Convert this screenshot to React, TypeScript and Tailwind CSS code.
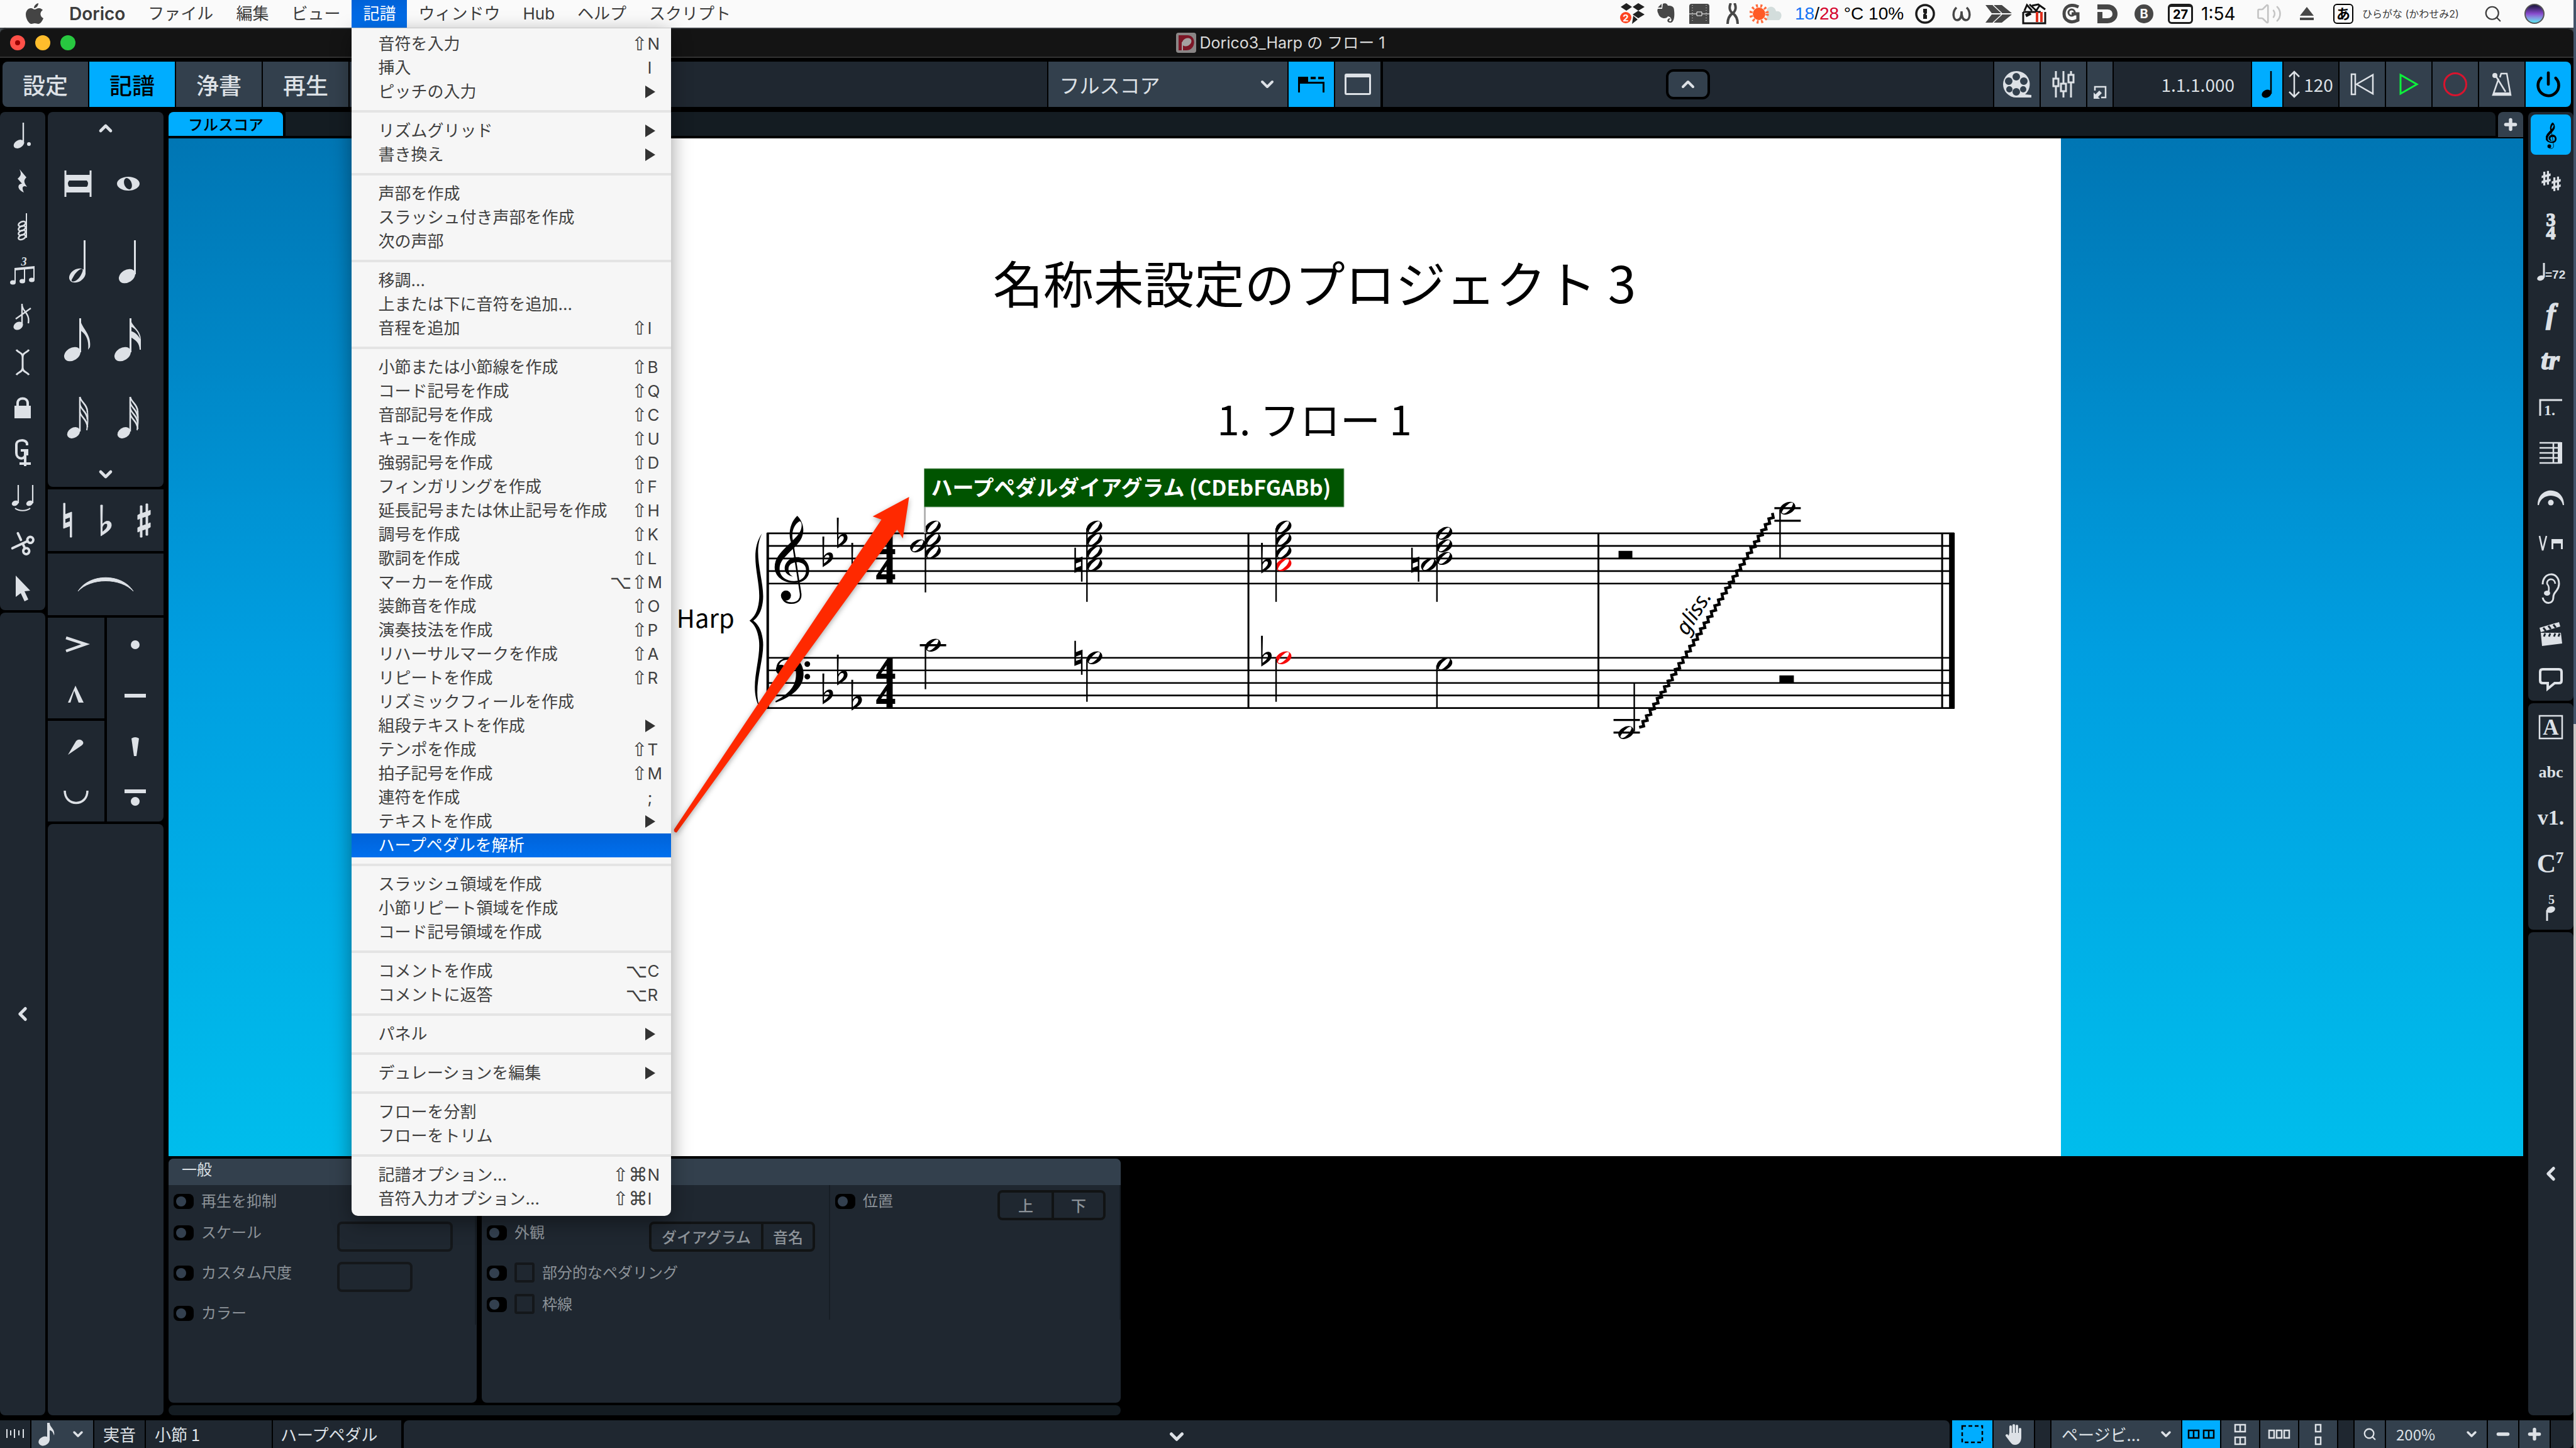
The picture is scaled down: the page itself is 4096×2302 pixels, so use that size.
import { ChevronDown, ChevronLeft, ChevronUp, Minus, Plus, Power, Scissors, Search, Volume2 } from "lucide-react";
import { clsx } from "clsx";
import type { ReactNode } from "react";

type MenuItem = { label: string; mods?: string; shortcut?: string; sub?: boolean; active?: boolean };

const menuGroups: MenuItem[][] = [
	[
		{ label: "音符を入力", mods: "⇧", shortcut: "N" },
		{ label: "挿入", shortcut: "I" },
		{ label: "ピッチの入力", sub: true },
	],
	[
		{ label: "リズムグリッド", sub: true },
		{ label: "書き換え", sub: true },
	],
	[{ label: "声部を作成" }, { label: "スラッシュ付き声部を作成" }, { label: "次の声部" }],
	[
		{ label: "移調..." },
		{ label: "上または下に音符を追加..." },
		{ label: "音程を追加", mods: "⇧", shortcut: "I" },
	],
	[
		{ label: "小節または小節線を作成", mods: "⇧", shortcut: "B" },
		{ label: "コード記号を作成", mods: "⇧", shortcut: "Q" },
		{ label: "音部記号を作成", mods: "⇧", shortcut: "C" },
		{ label: "キューを作成", mods: "⇧", shortcut: "U" },
		{ label: "強弱記号を作成", mods: "⇧", shortcut: "D" },
		{ label: "フィンガリングを作成", mods: "⇧", shortcut: "F" },
		{ label: "延長記号または休止記号を作成", mods: "⇧", shortcut: "H" },
		{ label: "調号を作成", mods: "⇧", shortcut: "K" },
		{ label: "歌詞を作成", mods: "⇧", shortcut: "L" },
		{ label: "マーカーを作成", mods: "⌥⇧", shortcut: "M" },
		{ label: "装飾音を作成", mods: "⇧", shortcut: "O" },
		{ label: "演奏技法を作成", mods: "⇧", shortcut: "P" },
		{ label: "リハーサルマークを作成", mods: "⇧", shortcut: "A" },
		{ label: "リピートを作成", mods: "⇧", shortcut: "R" },
		{ label: "リズミックフィールを作成" },
		{ label: "組段テキストを作成", sub: true },
		{ label: "テンポを作成", mods: "⇧", shortcut: "T" },
		{ label: "拍子記号を作成", mods: "⇧", shortcut: "M" },
		{ label: "連符を作成", shortcut: ";" },
		{ label: "テキストを作成", sub: true },
		{ label: "ハープペダルを解析", active: true },
	],
	[{ label: "スラッシュ領域を作成" }, { label: "小節リピート領域を作成" }, { label: "コード記号領域を作成" }],
	[
		{ label: "コメントを作成", mods: "⌥", shortcut: "C" },
		{ label: "コメントに返答", mods: "⌥", shortcut: "R" },
	],
	[{ label: "パネル", sub: true }],
	[{ label: "デュレーションを編集", sub: true }],
	[{ label: "フローを分割" }, { label: "フローをトリム" }],
	[
		{ label: "記譜オプション...", mods: "⇧⌘", shortcut: "N" },
		{ label: "音符入力オプション...", mods: "⇧⌘", shortcut: "I" },
	],
];

/* ---------- music glyphs, drawn around a pitch position ---------- */

function TrebleClef() {
	return (
		<g>
			<path
				fillRule="evenodd"
				d="M29 97C20 95 16 90 16 84C16 74 25 66 36 66C47 66 55 75 55 87C55 99 46 107 31 107C14 107 0 97 0 82C0 68 9 59 19 49L26 42C22 32 23 12 36 0C46 10 48 24 43 35C38 46 28 53 19 63C11 71 7 78 8 87C9 97 18 104 31 104C43 104 50 97 50 87C50 78 44 74 36 74C28 74 22 78 22 85C22 90 24 94 29 97ZM39 9C31 14 26 26 29 39C37 32 43 24 43 15C43 11 41 8 39 9Z"
			/>
			<path d="M28 39L41 122C43 133 37 139 27 139C20 139 14 136 12 129" fill="none" stroke="currentColor" strokeWidth="2.6" />
			<circle cx="18" cy="127" r="8" />
		</g>
	);
}

function BassClef() {
	return (
		<g>
			<path d="M2 20C0 7 10 0 22 0C37 0 45 11 45 26C45 47 27 62 1 71L0 69C22 57 33 45 33 26C33 12 29 3 20 3C12 3 7 7 6 12Z" />
			<circle cx="9" cy="19" r="8" />
			<circle cx="51" cy="10" r="4.5" />
			<circle cx="51" cy="30" r="4.5" />
		</g>
	);
}

function Flat() {
	return (
		<path
			fillRule="evenodd"
			d="M0 -35H3L2.4 -4C7 -11 17 -12 17 -3C17 4 8 9 0.5 14ZM2.6 0L2.5 8C7 5 11 1 11 -3C11 -7 5 -7 2.6 0Z"
		/>
	);
}

function Natural() {
	return <path fillRule="evenodd" d="M0 -27H2.5V-9L13 -13V27H10.5V9L0 13ZM2.5 -2V5L10.5 2V-5Z" />;
}

function Sharp() {
	return (
		<path
			d="M4 -23H7V-11L13 -13V-26H16V-14L20 -16V-9L16 -7V6L20 4V11L16 13V24H13V14L7 16V27H4V17L0 19V12L4 10V-3L0 -1V-8L4 -10ZM7 -4V9L13 7V-6Z"
			fillRule="evenodd"
		/>
	);
}

function HalfHead({ x, y, color = "#000" }: { x: number; y: number; color?: string }) {
	return (
		<g transform={`translate(${x} ${y}) rotate(-28)`} fill={color}>
			<path
				fillRule="evenodd"
				d="M-13 0C-13 -6 -7 -9 0 -9C7 -9 13 -6 13 0C13 6 7 9 0 9C-7 9 -13 6 -13 0ZM-11 3C-9 7 -2 5 4 3C9 0 12 -2 11 -4C9 -7 2 -5 -4 -3C-9 0 -12 1 -11 3Z"
			/>
		</g>
	);
}

function Stem({ x, y1, y2 }: { x: number; y1: number; y2: number }) {
	return <path d={`M${x} ${y1}V${y2}`} stroke="#000" strokeWidth="2.4" />;
}

const trebleLines = [850, 870, 890, 910, 930];
const bassLines = [1048, 1068, 1088, 1108, 1128];
const keyFlats = [
	{ x: 1309, y: 40 },
	{ x: 1332, y: 10 },
	{ x: 1355, y: 50 },
];

// Zigzag line from the low note up to the high one
const glissando = Array.from({ length: 75 }, (_, i) => {
	const t = i / 74;
	const side = i % 2 ? 2.6 : -2.6;
	const x = 2611 + 212 * t + side * 0.85;
	const y = 1160 - 341 * t + side * 0.53;
	return `${i ? "L" : "M"}${x.toFixed(1)} ${y.toFixed(1)}`;
}).join("");

function Score() {
	return (
		<svg viewBox="904 720 2376 640" className="mt-[22px] block w-full" fill="#000" color="#000" role="img" aria-label="Harp">
			{[...trebleLines, ...bassLines].map((y) => (
				<path key={y} d={`M1221 ${y}H3110`} stroke="#000" strokeWidth="2.6" />
			))}
			<path d="M1222 849V1129" stroke="#000" strokeWidth="4" />
			<path d="M1987 849V1129M2544 849V1129M3091 849V1129" stroke="#000" strokeWidth="3" />
			<path d="M3102 849H3111V1129H3102Z" />
			<path d="M1213 850C1190 882 1212 925 1208 958C1206 974 1201 983 1193 989C1201 995 1206 1004 1208 1020C1212 1053 1190 1096 1210 1129C1196 1096 1219 1048 1214 1018C1212 1003 1206 994 1199 989C1206 984 1212 975 1214 960C1219 930 1196 882 1213 850Z" />
			<text x="1077" y="1000" fontSize="40" className="font-['Noto_Sans_CJK_JP',sans-serif]">
				Harp
			</text>

			<g transform="translate(1233 822)">
				<TrebleClef />
			</g>
			<g transform="translate(1234 1048)">
				<BassClef />
			</g>
			{keyFlats.map(({ x, y }) => (
				<g key={x}>
					<g transform={`translate(${x} ${850 + y})`}>
						<Flat />
					</g>
					<g transform={`translate(${x} ${1068 + y})`}>
						<Flat />
					</g>
				</g>
			))}
			{[890, 930, 1088, 1128].map((y) => (
				<text key={y} x="1410" y={y} fontSize="60" fontWeight="700" textAnchor="middle" stroke="#000" strokeWidth="2" className="font-['Liberation_Serif',serif]">
					4
				</text>
			))}

			{/* bar 1 */}
			{[840, 860, 880].map((y) => (
				<HalfHead key={y} x={1485} y={y} />
			))}
			<HalfHead x={1461} y={870} />
			<Stem x={1473} y1={840} y2={944} />
			<path d="M1464 1028H1506" stroke="#000" strokeWidth="3.4" />
			<HalfHead x={1485} y={1028} />
			<Stem x={1473} y1={1030} y2={1098} />
			{[840, 860, 880, 900, 1048].map((y) => (
				<HalfHead key={y} x={1742} y={y} />
			))}
			<Stem x={1730} y1={842} y2={959} />
			<Stem x={1730} y1={1050} y2={1118} />
			<g transform="translate(1710 900)">
				<Natural />
			</g>
			<g transform="translate(1710 1048)">
				<Natural />
			</g>

			{/* bar 2, altered notes in red */}
			{[840, 860, 880].map((y) => (
				<HalfHead key={y} x={2043} y={y} />
			))}
			<HalfHead x={2043} y={900} color="#f50a0a" />
			<HalfHead x={2043} y={1048} color="#f50a0a" />
			<Stem x={2031} y1={842} y2={959} />
			<Stem x={2031} y1={1050} y2={1118} />
			<g transform="translate(2007 900)">
				<Flat />
			</g>
			<g transform="translate(2007 1048)">
				<Flat />
			</g>
			{[850, 870, 890, 1058].map((y) => (
				<HalfHead key={y} x={2299} y={y} />
			))}
			<HalfHead x={2274} y={900} />
			<Stem x={2287} y1={852} y2={959} />
			<Stem x={2287} y1={1060} y2={1128} />
			<g transform="translate(2246 900)">
				<Natural />
			</g>

			{/* bar 3 */}
			<path d="M2576 878H2598V890H2576ZM2832 1076H2855V1088H2832Z" />
			<path d="M2824 810H2866M2824 830H2866M2568 1147H2610M2568 1167H2610" stroke="#000" strokeWidth="3.4" />
			<HalfHead x={2845} y={810} />
			<Stem x={2833} y1={812} y2={889} />
			<HalfHead x={2588} y={1167} />
			<Stem x={2601} y1={1088} y2={1165} />
			<path d={glissando} fill="none" stroke="#000" strokeWidth="4.5" />
			<text
				transform="translate(2705 982) rotate(-58)"
				fontSize="34"
				fontStyle="italic"
				textAnchor="middle"
				className="font-['Noto_Sans',sans-serif]"
			>
				gliss.
			</text>

			{/* signpost */}
			<path d="M1472 808V850" stroke="#b4b4b4" strokeWidth="3" />
			<path d="M1471 747H2139V808H1471Z" fill="#005400" stroke="#7aa27a" strokeWidth="1" />
			<text x="1482" y="790" fontSize="34" fontWeight="700" fill="#fff" className="font-['Noto_Sans_CJK_JP',sans-serif]">
				ハープペダルダイアグラム (CDEbFGABb)
			</text>

			<path
				d="M1447 792L1389 823L1403 828L1073 1321Q1072 1326 1077 1326L1428 844L1437 858Z"
				fill="#ff2900"
				className="drop-shadow-[0_3px_4px_rgba(0,0,0,0.35)]"
			/>
		</svg>
	);
}

/* ---------- toolbox icons ---------- */

function Icon({ w, h, children, label }: { w: number; h: number; children: ReactNode; label?: string }) {
	return (
		<svg width={w} height={h} viewBox={`0 0 ${w} ${h}`} fill="currentColor" aria-label={label} className="shrink-0 overflow-visible">
			{children}
		</svg>
	);
}

function SerifText({
	x,
	y,
	size,
	children,
	italic,
	heavy,
}: {
	x: number;
	y: number;
	size: number;
	children: ReactNode;
	italic?: boolean;
	heavy?: boolean;
}) {
	return (
		<text
			x={x}
			y={y}
			fontSize={size}
			fontWeight="700"
			fontStyle={italic ? "italic" : "normal"}
			textAnchor="middle"
			stroke={heavy ? "currentColor" : "none"}
			strokeWidth="1.5"
			className="font-['Liberation_Serif',serif]"
		>
			{children}
		</text>
	);
}

function NoteIcon({ flags = 0, open = false }: { flags?: number; open?: boolean }) {
	if (flags > 2) {
		return (
			<Icon w={34} h={66}>
				<ellipse cx="10" cy="57" rx="11" ry="8" transform="rotate(-32 10 57)" />
				<path d="M20 0V55" stroke="currentColor" strokeWidth="2.5" />
				{Array.from({ length: flags }, (_, i) => (
					<path
						key={i}
						d="M20 0C22 9 32 12 32 24"
						transform={`translate(0 ${i * (flags === 3 ? 12 : 9)})`}
						fill="none"
						stroke="currentColor"
						strokeWidth="2.500"
					/>
				))}
				<path d="M32 22C33 34 33 42 31 53" stroke="currentColor" strokeWidth="2" fill="none" />
			</Icon>
		);
	}
	return (
		<Icon w={flags ? 44 : 30} h={68}>
			{open ? (
				<path
					transform="translate(14 56) rotate(-32)"
					fillRule="evenodd"
					d="M-14 0C-14 -6 -7 -10 0 -10C7 -10 14 -6 14 0C14 6 7 10 0 10C-7 10 -14 6 -14 0ZM-12 3C-10 7 -2 6 4 3C9 0 13 -2 12 -5C9 -7 2 -6 -4 -3C-9 0 -13 1 -12 3Z"
				/>
			) : (
				<ellipse cx="13" cy="57" rx="14" ry="10" transform="rotate(-32 13 57)" />
			)}
			<path d="M25.500 0V54" stroke="currentColor" strokeWidth="3" />
			{flags === 1 && <path d="M25 0C27 16 44 24 41 46L38 50C40 34 34 24 25 19Z" />}
			{flags === 2 && (
				<path
					fillRule="evenodd"
					d="M25 0C27 13 42 18 42 34V50H40C40 40 34 34 25 30V20C34 22 38 28 41 33C38 23 34 16 25 13Z"
				/>
			)}
		</Icon>
	);
}

const leftTools: ReactNode[] = [
	<Icon w={28} h={42} key="dotted">
		<ellipse cx="8" cy="34" rx="9" ry="6" transform="rotate(-30 8 34)" />
		<path d="M15 0V33" stroke="currentColor" strokeWidth="2.4" />
		<circle cx="24" cy="34" r="3" />
	</Icon>,
	<Icon w={16} h={38} key="rest">
		<path d="M3 0L14 13C9 18 10 21 15 28C8 25 6 29 10 37C-2 32 0 23 7 23L0 15C6 10 6 7 3 0Z" />
	</Icon>,
	<Icon w={16} h={42} key="chord">
		<path d="M14 0V39" stroke="currentColor" strokeWidth="2" />
		{[17, 24, 31, 38].map((y) => (
			<ellipse key={y} cx="7" cy={y} rx="6" ry="3.500" fill="none" stroke="currentColor" strokeWidth="2.500" transform={`rotate(-25 7 ${y})`} />
		))}
	</Icon>,
	<Icon w={40} h={42} key="triplet">
		<SerifText x={22} y={11} size={18} italic>
			3
		</SerifText>
		<path d="M8 17V38M23 16V36M38 14V34" stroke="currentColor" strokeWidth="2" />
		<path d="M7 15L39 12V16L7 19Z" />
		<ellipse cx="4.500" cy="38" rx="4.500" ry="3.500" />
		<ellipse cx="19.500" cy="36" rx="4.500" ry="3.500" />
		<ellipse cx="34.500" cy="34" rx="4.500" ry="3.500" />
	</Icon>,
	<Icon w={30} h={42} key="grace">
		<ellipse cx="8" cy="35" rx="8" ry="6" transform="rotate(-30 8 35)" />
		<path d="M14 0V34M4 24L28 7M14 2C15 13 27 15 24 31" stroke="currentColor" strokeWidth="2.400" fill="none" />
	</Icon>,
	<Icon w={22} h={42} key="caret">
		<path d="M1 1C4 6 11 5 11 13V29C11 37 4 36 1 41M21 1C18 6 11 5 11 13M11 29C11 37 18 36 21 41" stroke="currentColor" strokeWidth="3" fill="none" />
	</Icon>,
	<Icon w={26} h={34} key="lock">
		<path d="M0 14H26V34H0Z" />
		<path d="M5 16V10C5 0 21 0 21 10V16" stroke="currentColor" strokeWidth="4" fill="none" />
	</Icon>,
	<Icon w={26} h={44} key="force">
		<path d="M20 10V8C20 0 3 0 3 9V22C3 33 17 33 17 25V18H10M17 18V43M8 39H26M17 18H20V26" stroke="currentColor" strokeWidth="4" fill="none" />
	</Icon>,
	<Icon w={34} h={42} key="tie">
		<ellipse cx="5" cy="29" rx="5.500" ry="4" transform="rotate(-25 5 29)" />
		<ellipse cx="28" cy="29" rx="5.500" ry="4" transform="rotate(-25 28 29)" />
		<path d="M10 0V29M33 0V29M5 37C11 42 23 42 29 37" stroke="currentColor" strokeWidth="2.200" fill="none" />
	</Icon>,
	<Scissors key="scissors" size={38} strokeWidth={2.5} className="rotate-[200deg]" />,
	<Icon w={24} h={42} key="pointer">
		<path d="M1 0L24 24L15 25L21 38L15 41L9 28L1 34Z" />
	</Icon>,
];

const rightTools: ReactNode[] = [
	<svg key="clefs" width="17" height="42" viewBox="0 0 56 142" fill="currentColor" stroke="currentColor" strokeWidth="4">
		<TrebleClef />
	</svg>,
	<Icon w={32} h={32} key="keys">
		<g transform="translate(2 11) scale(0.65 0.42)" stroke="currentColor" strokeWidth="2">
			<Sharp />
		</g>
		<g transform="translate(18 20) scale(0.65 0.42)" stroke="currentColor" strokeWidth="2">
			<Sharp />
		</g>
	</Icon>,
	<Icon w={24} h={44} key="time">
		<SerifText x={12} y={21} size={30} heavy>
			3
		</SerifText>
		<SerifText x={12} y={42} size={30} heavy>
			4
		</SerifText>
	</Icon>,
	<Icon w={44} h={30} key="tempo">
		<ellipse cx="6" cy="25" rx="6" ry="4" transform="rotate(-20 6 25)" />
		<path d="M11 1V24" stroke="currentColor" strokeWidth="3" />
		<text x="13" y="26" fontSize="19" fontWeight="700" className="font-['Liberation_Sans',sans-serif]">
			=72
		</text>
	</Icon>,
	<Icon w={40} h={44} key="dynamics">
		<SerifText x={20} y={32} size={46} italic heavy>
			f
		</SerifText>
	</Icon>,
	<Icon w={46} h={36} key="ornaments">
		<SerifText x={22} y={29} size={44} italic heavy>
			tr
		</SerifText>
	</Icon>,
	<Icon w={40} h={28} key="repeats">
		<path d="M3 27V2H38" stroke="currentColor" strokeWidth="3" fill="none" />
		<SerifText x={18} y={26} size={24}>
			1.
		</SerifText>
	</Icon>,
	<Icon w={36} h={36} key="bars">
		<path d="M0 2H34M0 10H34M0 18H34M0 26H34M0 34H34M22 2V34" stroke="currentColor" strokeWidth="2.600" />
		<path d="M29 1H36V35H29Z" />
	</Icon>,
	<Icon w={42} h={26} key="holds">
		<path d="M0 24C0 -7 42 -7 42 24H40C36 4 6 4 2 24Z" />
		<circle cx="21" cy="20" r="4.500" />
	</Icon>,
	<Icon w={38} h={26} key="techniques">
		<path d="M1 1L6 24L12 1" stroke="currentColor" strokeWidth="2.600" fill="none" />
		<path d="M20 6H38V22H35V13H23V22H20Z" />
	</Icon>,
	<Icon w={32} h={50} key="cues">
		<path d="M3 18C3 -3 29 -3 29 17C29 29 20 29 20 38C20 51 5 50 3 39" stroke="currentColor" strokeWidth="3" fill="none" />
		<path d="M23 17C22 7 9 8 10 17C14 22 13 26 12 32" stroke="currentColor" strokeWidth="2.600" fill="none" />
		<ellipse cx="10" cy="32" rx="5" ry="4" />
	</Icon>,
	<Icon w={36} h={38} key="video">
		<path d="M0 9L31 0L33 7L2 16ZM2 17H34L36 34L4 38Z" />
		<path d="M6 9L10 14M14 6L18 11M22 4L26 9M9 18L7 23M17 18L15 23M25 18L23 23M32 18L30 23" stroke="#1f2730" strokeWidth="3" />
	</Icon>,
	<Icon w={38} h={38} key="comments">
		<path d="M6 3H32Q36 3 36 7V21Q36 25 32 25H25L14 34V25H6Q2 25 2 21V7Q2 3 6 3Z" stroke="currentColor" strokeWidth="4" fill="none" />
	</Icon>,
];

const textTools: ReactNode[] = [
	<Icon w={38} h={38} key="rehearsal">
		<path d="M1 1H37V37H1Z" fill="none" stroke="currentColor" strokeWidth="2.500" />
		<SerifText x={19} y={31} size={35}>
			A
		</SerifText>
	</Icon>,
	<Icon w={44} h={36} key="text">
		<SerifText x={22} y={26} size={26}>
			abc
		</SerifText>
	</Icon>,
	<Icon w={44} h={36} key="lyrics">
		<SerifText x={22} y={29} size={34}>
			v1.
		</SerifText>
	</Icon>,
	<Icon w={46} h={38} key="chords">
		<SerifText x={16} y={34} size={42}>
			C
		</SerifText>
		<SerifText x={37} y={19} size={26}>
			7
		</SerifText>
	</Icon>,
	<Icon w={20} h={42} key="fingering">
		<SerifText x={11} y={14} size={20}>
			5
		</SerifText>
		<ellipse cx="10" cy="23" rx="7" ry="5" transform="rotate(-20 10 23)" />
		<path d="M4 24V41" stroke="currentColor" strokeWidth="3" />
	</Icon>,
];

const articulationsLeft: ReactNode[][] = [
	[
		<Icon w={36} h={28} key="accent">
			<path d="M2 4L33 14L2 25" fill="none" stroke="currentColor" strokeWidth="4.500" />
		</Icon>,
		<Icon w={26} h={28} key="marcato">
			<path d="M12 0L25 27H17L10 8L4 27H0Z" />
		</Icon>,
	],
	[
		<Icon w={26} h={26} key="stress">
			<path d="M0 25L13 3Q17 -1 22 2Q27 6 22 10Z" />
		</Icon>,
		<Icon w={40} h={22} key="unstress">
			<path d="M2 0C2 26 38 26 38 0" fill="none" stroke="currentColor" strokeWidth="3.500" />
		</Icon>,
	],
];

const articulationsRight: ReactNode[] = [
	<Icon w={14} h={14} key="staccato">
		<circle cx="7" cy="7" r="7" />
	</Icon>,
	<Icon w={34} h={6} key="tenuto">
		<path d="M0 0H34V6H0Z" />
	</Icon>,
	<Icon w={12} h={30} key="wedge">
		<path d="M0 2Q6 -2 12 2L8 30H4Z" />
	</Icon>,
	<Icon w={34} h={26} key="portato">
		<path d="M0 0H34V6H0Z" />
		<circle cx="17" cy="19" r="7" />
	</Icon>,
];

function ToolCell({ children, active, className }: { children: ReactNode; active?: boolean; className?: string }) {
	return (
		<button
			type="button"
			className={clsx(
				"flex items-center justify-center",
				active && "rounded-lg bg-[#00adff] text-black",
				className ?? "h-18 w-full pt-1",
			)}
		>
			{children}
		</button>
	);
}

function Panel({ children, className }: { children?: ReactNode; className?: string }) {
	return <div className={clsx("bg-[#1f2730]", className)}>{children}</div>;
}

/* ---------- system menu bar ---------- */

function NotationMenu() {
	return (
		<div className="absolute top-full left-0 z-30 w-[508px] rounded-b-[10px] border-t border-[#c8c8c8] bg-[#f6f6f6] pt-1.5 pb-2 text-[#404040] shadow-[0_10px_32px_rgba(0,0,0,0.4)]">
			{menuGroups.map((group, i) => (
				<ul key={i} className={clsx(i > 0 && "mt-[10px] border-t-4 border-[#e4e4e4] pt-[10px]")}>
					{group.map((item) => (
						<li key={item.label}>
							<button
								type="button"
								className={clsx(
									"flex h-[38px] w-full items-center pl-[42px] text-[26px] leading-none font-normal",
									item.active && "bg-linear-to-b from-[#0062d8] to-[#0070ee] text-white",
								)}
							>
								<span className="grow text-left whitespace-nowrap">{item.label}</span>
								{item.mods && <span className="font-['DejaVu_Sans',sans-serif] text-[30px]">{item.mods}</span>}
								{item.shortcut && <span className="w-[38px] text-left">{item.shortcut}</span>}
								{item.sub && (
									<svg width="16" height="20" viewBox="0 0 16 20" fill="#333" className="mr-[25px]">
										<path d="M0 0L16 10L0 20Z" />
									</svg>
								)}
							</button>
						</li>
					))}
				</ul>
			))}
		</div>
	);
}

function StatusCell({ children, className }: { children: ReactNode; className: string }) {
	return <div className={clsx("flex h-full shrink-0 items-center justify-center", className)}>{children}</div>;
}

function MenuBar() {
	return (
		<nav className="flex h-11 items-center bg-[#fafafa] text-[26px] leading-none text-[#3c3c3c]">
			<div className="flex w-[92px] justify-end pr-[23px]">
				<svg width="28" height="34" viewBox="0 0 28 34" fill="#444">
					<path d="M20 0C20 4 17 8 13 8C13 4 16 1 20 0ZM14 10C16 10 18 8 21 8C24 8 26 10 27 11C22 14 22 21 28 24C26 29 23 33 20 33C18 33 17 32 14 32C12 32 11 33 9 33C5 33 0 25 0 18C0 12 4 8 8 8C11 8 12 10 14 10Z" />
				</svg>
			</div>
			<button type="button" className="h-full px-[18px] text-[28px] font-semibold">
				Dorico
			</button>
			{["ファイル", "編集", "ビュー"].map((label) => (
				<button type="button" key={label} className="h-full px-[18px]">
					{label}
				</button>
			))}
			<div className="relative h-full">
				<button type="button" className="h-full bg-linear-to-b from-[#0062d8] to-[#0070ee] px-[18px] text-white">
					記譜
				</button>
				<NotationMenu />
			</div>
			{["ウィンドウ", "Hub", "ヘルプ", "スクリプト"].map((label) => (
				<button type="button" key={label} className="h-full px-[18px]">
					{label}
				</button>
			))}

			<div className="ml-auto flex h-full items-center pr-[34px]">
				<StatusCell className="w-[53px]">
					<svg width="40" height="34" viewBox="0 0 40 34" fill="#222">
						<path d="M10 0L19 6L10 12L1 6ZM29 0L39 6L29 12L20 6ZM29 12L39 18L29 24L20 18ZM21 20L28 26L19 33Z" />
						<circle cx="9" cy="23" r="9" fill="#fd4420" />
						<text x="9" y="29" fontSize="15" fontWeight="700" fill="#fff" textAnchor="middle">
							2
						</text>
					</svg>
				</StatusCell>
				<StatusCell className="w-[53px]">
					<svg width="28" height="34" viewBox="0 0 28 34" fill="#474747">
						<path d="M9 1C13 -1 16 1 17 4C23 4 27 5 27 12C28 20 27 31 21 31C15 31 15 26 19 24L22 25C18 26 18 29 21 29C24 28 23 22 17 21C15 26 4 25 2 17C0 13 0 11 1 9H8Z" />
						<path d="M7 1V7H1Z" />
					</svg>
				</StatusCell>
				<StatusCell className="w-[53px]">
					<svg width="32" height="32" viewBox="0 0 32 32" fill="#474747">
						<path d="M4 0H28Q32 0 32 4V32H0V4Q0 0 4 0Z" />
						<path d="M0 16H12M20 16H32M12 13H20V19H12Z" stroke="#fff" strokeWidth="1" fill="none" />
						<path d="M5 2V30M27 2V30" stroke="#fff" strokeDasharray="1 3" />
					</svg>
				</StatusCell>
				<StatusCell className="w-[53px]">
					<svg width="22" height="34" viewBox="0 0 22 34" fill="none" stroke="#474747" strokeWidth="4">
						<path d="M8 0C4 9 8 14 11 16C17 20 19 27 19 33M14 0C18 9 14 14 11 16C5 20 3 27 3 33" />
					</svg>
				</StatusCell>
				<StatusCell className="w-[53px]">
					<svg width="52" height="32" viewBox="0 0 52 32">
						<path d="M27 26H47C54 20 50 10 42 12C40 2 27 3 27 12Z" fill="#d3dddc" />
						<circle cx="15" cy="16" r="13" fill="none" stroke="#ff6a3a" strokeWidth="5" strokeDasharray="3 4" />
						<circle cx="15" cy="16" r="10" fill="#ff5a26" />
					</svg>
				</StatusCell>
				<div className="w-[198px] pl-5 font-['Liberation_Sans',sans-serif] text-[28px] whitespace-nowrap text-black">
					<span className="text-[#1272f5]">18</span>/<span className="text-[#d4002a]">28</span> °C 10%
				</div>
				<StatusCell className="w-[58px]">
					<svg width="32" height="32" viewBox="0 0 32 32">
						<circle cx="16" cy="16" r="14" fill="none" stroke="#1c1c1c" strokeWidth="3.500" />
						<path d="M13 8H19V15L17 17L19 18V24H13V17L15 15L13 14Z" fill="#1c1c1c" />
					</svg>
				</StatusCell>
				<StatusCell className="w-[58px]">
					<svg width="30" height="24" viewBox="0 0 30 24" fill="none" stroke="#474747" strokeWidth="3.500">
						<path d="M7 2C0 8 1 22 8 22C13 22 15 17 15 8C15 17 17 22 22 22C29 22 30 8 23 2" />
					</svg>
				</StatusCell>
				<StatusCell className="w-[58px]">
					<svg width="44" height="28" viewBox="0 0 44 28" fill="#474747">
						<path d="M2 0H28L44 13H12ZM2 28H28L44 15H12Z" />
						<path d="M14 0L28 13M14 28L28 15" stroke="#fafafa" strokeWidth="1.500" />
					</svg>
				</StatusCell>
				<StatusCell className="w-[58px]">
					<svg width="40" height="34" viewBox="0 0 40 34" fill="none" stroke="#111" strokeWidth="3">
						<path d="M2 14H30M37 14V32H2V14M4 12L8 3L16 12M12 2L24 13M16 4L26 2L37 10M28 4L22 13" />
						<path d="M24 14V30M31 14V30" stroke="#e0301e" strokeWidth="4" />
						<path d="M6 20L14 16" strokeWidth="5" />
					</svg>
				</StatusCell>
				<StatusCell className="w-[58px]">
					<svg width="28" height="32" viewBox="0 0 28 32" fill="none" stroke="#474747" strokeWidth="5">
						<path d="M26 5C10 -2 3 7 3 16C3 27 14 32 25 26V16H15" />
						<circle cx="15" cy="14" r="5" strokeWidth="3" />
					</svg>
				</StatusCell>
				<StatusCell className="w-[58px]">
					<svg width="32" height="30" viewBox="0 0 32 30" fill="none" stroke="#474747" strokeWidth="8">
						<path d="M0 4H16C32 4 32 26 16 26H4V12" />
					</svg>
				</StatusCell>
				<StatusCell className="w-[58px]">
					<span className="flex size-[30px] items-center justify-center rounded-full bg-[#474747] text-[20px] font-bold text-[#fafafa]">B</span>
				</StatusCell>
				<StatusCell className="w-[58px]">
					<span className="flex h-8 w-10 items-center justify-center rounded-md border-3 border-t-5 border-[#1c1c1c] text-[20px] font-bold text-black">
						27
					</span>
				</StatusCell>
				<div className="w-20 pl-1 text-[28px] text-black">1:54</div>
				<StatusCell className="w-16">
					<Volume2 size={42} color="#c4c4c4" strokeWidth={1.5} />
				</StatusCell>
				<StatusCell className="w-14">
					<svg width="22" height="22" viewBox="0 0 22 22" fill="#474747">
						<path d="M11 0L22 14H0ZM0 17H22V21H0Z" />
					</svg>
				</StatusCell>
				<StatusCell className="w-[60px]">
					<span className="flex size-8 items-center justify-center rounded-md border-2 border-black text-[22px] font-bold text-black">あ</span>
				</StatusCell>
				<div className="w-[170px] text-[16px] whitespace-nowrap">ひらがな (かわせみ2)</div>
				<StatusCell className="w-[76px]">
					<Search size={30} strokeWidth={1.75} />
				</StatusCell>
				<StatusCell className="w-14">
					<span className="size-8 rounded-full border-2 border-[#555] bg-linear-to-b from-[#1c1440] via-[#8a4bd0] to-[#4de6f0]" />
				</StatusCell>
			</div>
		</nav>
	);
}

/* ---------- application window ---------- */

function TitleBar() {
	return (
		<header className="flex h-12 items-center rounded-t-[10px] border-t-2 border-b-2 border-t-[#3a3e42] border-b-[#333] bg-[#141414] font-['Inter','Noto_Sans_CJK_JP',sans-serif]">
			<div className="flex w-0 gap-4 pl-4">
				<span className="flex size-6 shrink-0 items-center justify-center rounded-full bg-[#ff5048]">
					<span className="size-2 rounded-full bg-[#900]" />
				</span>
				<span className="size-6 shrink-0 rounded-full bg-[#ffbd2c]" />
				<span className="size-6 shrink-0 rounded-full bg-[#28c840]" />
			</div>
			<div className="flex grow items-center justify-center gap-1.5 pr-9 text-[25px] leading-none text-[#dcdcdc]">
				<svg width="32" height="32" viewBox="0 0 32 32">
					<path d="M4 0H28Q32 0 32 4V28Q32 32 28 32H4Q0 32 0 28V4Q0 0 4 0Z" fill="#8a8686" />
					<path d="M4 4H18C33 4 32 28 16 28H4Z" fill="#7c1626" />
					<ellipse cx="17" cy="15" rx="8" ry="6" transform="rotate(-30 17 15)" fill="#a5a1a1" />
					<path d="M10 15V28" stroke="#a5a1a1" strokeWidth="2" />
				</svg>
				<h1>Dorico3_Harp の フロー 1</h1>
			</div>
		</header>
	);
}

function Toolbar() {
	return (
		<div className="mt-1.5 flex h-18 gap-0.5 px-1 text-[#dde1e6]">
			{["設定", "記譜", "浄書", "再生", "印刷"].map((mode) => (
				<button
					type="button"
					key={mode}
					className={clsx(
						"w-[136px] shrink-0 text-[36px] leading-none font-medium",
						mode === "設定" && "rounded-l-lg",
						mode === "記譜" ? "bg-[#00adff] text-black" : "bg-[#33404d]",
					)}
				>
					{mode}
				</button>
			))}
			<Panel className="min-w-0 flex-1" />
			<label className="relative flex w-[380px] shrink-0 items-center bg-[#33404d]">
				<select aria-label="レイアウト" className="h-full w-full appearance-none bg-transparent pl-[18px] text-[32px] leading-none">
					<option>フルスコア</option>
				</select>
				<ChevronDown size={32} strokeWidth={3} className="pointer-events-none absolute right-4" />
			</label>
			<button type="button" aria-label="タブを表示" className="flex w-18 shrink-0 items-center justify-center bg-[#00adff] text-black">
				<Icon w={42} h={26}>
					<path d="M0 1H16V9H42V26H39V12H3V26H0ZM20 1H28V5H20ZM32 1H41V5H32Z" />
				</Icon>
			</button>
			<button type="button" aria-label="ウィンドウ" className="mr-0.5 flex w-18 shrink-0 items-center justify-center bg-[#33404d]">
				<Icon w={42} h={34}>
					<path fillRule="evenodd" d="M3 0H39Q42 0 42 3V31Q42 34 39 34H3Q0 34 0 31V3Q0 0 3 0ZM3 6V31H39V6Z" />
				</Icon>
			</button>
			<Panel className="flex min-w-0 flex-1 items-center justify-center">
				<button type="button" aria-label="ツールバーを隠す" className="flex h-12 w-[70px] items-center justify-center rounded-xl border-4 border-black bg-[#33404d]">
					<ChevronUp size={32} strokeWidth={3} />
				</button>
			</Panel>
			<button type="button" aria-label="ビデオ" className="flex w-18 shrink-0 items-center justify-center bg-[#33404d]">
				<Icon w={46} h={42}>
					<path
						fillRule="evenodd"
						d="M22 0A21 21 0 0 1 36 37L46 38V42H22A21 21 0 0 1 22 0ZM22 3A6 6 0 0 0 22 15A6 6 0 0 0 22 3ZM22 27A6 6 0 0 0 22 39A6 6 0 0 0 22 27ZM10 10A6 6 0 0 0 10 22A6 6 0 0 0 10 10ZM34 10A6 6 0 0 0 34 22A6 6 0 0 0 34 10ZM11 24A5 5 0 0 0 11 34A5 5 0 0 0 11 24ZM33 24A5 5 0 0 0 33 34A5 5 0 0 0 33 24Z"
					/>
				</Icon>
			</button>
			<button type="button" aria-label="ミキサー" className="flex w-18 shrink-0 items-center justify-center bg-[#33404d]">
				<Icon w={34} h={42}>
					<path
						d="M5 0V12M5 24V42M17 0V20M17 32V42M29 0V6M29 18V42M1 12H9V24H1ZM13 20H21V32H13ZM25 6H33V18H25Z"
						fill="none"
						stroke="currentColor"
						strokeWidth="3"
					/>
				</Icon>
			</button>
			<button type="button" aria-label="トランスポート" className="flex w-10 shrink-0 items-end justify-center bg-[#33404d] pb-3">
				<Icon w={22} h={22}>
					<path d="M3 8V2H20V19H13" fill="none" stroke="currentColor" strokeWidth="2.500" />
					<path d="M1 21V11L4 14L10 8L14 12L8 18L11 21Z" />
				</Icon>
			</button>
			<Panel className="flex w-[218px] shrink-0 items-center justify-end pr-[26px] text-[28px] leading-none">1.1.1.000</Panel>
			<button type="button" aria-label="固定テンポ" className="flex w-12 shrink-0 items-center justify-center bg-[#00adff] text-black">
				<Icon w={18} h={42}>
					<ellipse cx="8" cy="36" rx="8" ry="6" transform="rotate(-25 8 36)" />
					<path d="M15 0V36" stroke="currentColor" strokeWidth="2.500" />
				</Icon>
			</button>
			<Panel className="flex w-[87px] shrink-0 items-center justify-center gap-1.5 text-[28px] leading-none">
				<Icon w={18} h={42}>
					<path d="M9 2V40M1 9L9 1L17 9M1 33L9 41L17 33" fill="none" stroke="currentColor" strokeWidth="2.500" />
				</Icon>
				120
			</Panel>
			<button type="button" aria-label="先頭に戻る" className="flex w-18 shrink-0 items-center justify-center bg-[#33404d]">
				<Icon w={38} h={34}>
					<path d="M2 1H8V33H2ZM36 2V32L10 17Z" fill="none" stroke="currentColor" strokeWidth="2.500" />
				</Icon>
			</button>
			<button type="button" aria-label="再生" className="flex w-18 shrink-0 items-center justify-center bg-[#33404d]">
				<Icon w={30} h={34}>
					<path d="M2 2L28 17L2 32Z" fill="none" stroke="#0df03c" strokeWidth="3" />
				</Icon>
			</button>
			<button type="button" aria-label="録音" className="flex w-18 shrink-0 items-center justify-center bg-[#33404d]">
				<span className="size-[38px] rounded-full border-3 border-[#d8142e]" />
			</button>
			<button type="button" aria-label="クリック" className="flex w-18 shrink-0 items-center justify-center bg-[#33404d]">
				<Icon w={34} h={38}>
					<path d="M12 10L3 36H31L25 2H16L14 8M7 5L23 31" fill="none" stroke="currentColor" strokeWidth="2.500" />
					<path d="M4 32H30V37H2Z" />
					<circle cx="6" cy="5" r="4" />
				</Icon>
			</button>
			<button type="button" aria-label="オン" className="flex w-18 shrink-0 items-center justify-center rounded-r-lg bg-[#00adff] text-black">
				<Power size={44} strokeWidth={2.5} />
			</button>
		</div>
	);
}

function NotesPanel() {
	return (
		<div className="flex w-[184px] shrink-0 flex-col gap-1">
			<Panel className="flex flex-col items-center rounded-lg">
				<button type="button" aria-label="上へ" className="flex h-[52px] items-center">
					<ChevronUp size={32} strokeWidth={3.5} />
				</button>
				<div className="grid w-full grid-cols-2 pr-4 pl-2">
					<ToolCell className="h-31">
						<Icon w={44} h={42}>
							<path d="M2 0V42M42 0V42" stroke="currentColor" strokeWidth="3" />
							<path fillRule="evenodd" d="M2 7H42V35H2ZM8 16Q4 21 8 26H36Q40 21 36 16Z" />
						</Icon>
					</ToolCell>
					<ToolCell className="h-31">
						<Icon w={36} h={22}>
							<path fillRule="evenodd" d="M18 0C28 0 36 5 36 11C36 17 28 22 18 22C8 22 0 17 0 11C0 5 8 0 18 0ZM15 2C8 4 11 19 20 20C27 19 24 3 15 2Z" />
						</Icon>
					</ToolCell>
					<ToolCell className="h-31">
						<NoteIcon open />
					</ToolCell>
					<ToolCell className="h-31">
						<NoteIcon />
					</ToolCell>
					{[1, 2, 3, 4].map((flags) => (
						<ToolCell key={flags} className="h-31">
							<NoteIcon flags={flags} />
						</ToolCell>
					))}
				</div>
				<button type="button" aria-label="下へ" className="flex h-12 items-center pt-2">
					<ChevronDown size={32} strokeWidth={3.5} />
				</button>
			</Panel>
			<Panel className="grid h-[98px] grid-cols-3">
				{[Natural, Flat, Sharp].map((Accidental, i) => (
					<ToolCell key={i} className="h-full">
						<svg width="22" height="56" viewBox="-1 -28 22 56" fill="currentColor" stroke="currentColor" strokeWidth="1">
							<g transform={["translate(4 0)", "translate(2 11)", "translate(0 0)"][i]}>
								<Accidental />
							</g>
						</svg>
					</ToolCell>
				))}
			</Panel>
			<Panel className="flex h-[98px] items-center justify-center">
				<Icon w={88} h={22} label="スラー">
					<path d="M0 22C18 -7 70 -7 88 22C68 0 20 0 0 22Z" stroke="currentColor" strokeWidth="1" />
				</Icon>
			</Panel>
			<div className="flex gap-1">
				<div className="flex flex-1 flex-col gap-1">
					{articulationsLeft.map((pair, i) => (
						<Panel key={i} className="flex h-40 flex-col">
							{pair.map((icon, j) => (
								<ToolCell key={j} className="flex-1 pt-1">
									{icon}
								</ToolCell>
							))}
						</Panel>
					))}
				</div>
				<Panel className="flex flex-1 flex-col rounded-br-lg">
					{articulationsRight.map((icon, i) => (
						<ToolCell key={i} className="flex-1 pt-1">
							{icon}
						</ToolCell>
					))}
				</Panel>
			</div>
			<Panel className="grow rounded-lg" />
		</div>
	);
}

/* ---------- properties ---------- */

const switchClass =
	"flex h-6 w-8 appearance-none items-center rounded-lg bg-black pl-1 before:size-4 before:rounded-full before:bg-[#33404f] before:content-['']";

function PropertySwitch({ label }: { label: string }) {
	return (
		<label className="flex h-9 items-center gap-3 whitespace-nowrap">
			<input type="checkbox" className={switchClass} />
			<span className="pb-1">{label}</span>
		</label>
	);
}

function PropertyCheck({ label }: { label: string }) {
	return (
		<div className="flex h-9 items-center gap-3 whitespace-nowrap">
			<input type="checkbox" aria-label={`${label}を設定`} className={switchClass} />
			<label className="flex items-center gap-3 pb-0.5">
				<input type="checkbox" className="size-8 appearance-none rounded-sm border-4 border-[#14171a]" />
				<span className="pb-0.5">{label}</span>
			</label>
		</div>
	);
}

function Segmented({ options, wide }: { options: string[]; wide?: boolean }) {
	return (
		<div className="mr-[22px] ml-auto flex h-12 rounded-lg border-4 border-[#111314] font-medium">
			{options.map((option, i) => (
				<button
					type="button"
					key={option}
					className={clsx(i > 0 && "border-l-4 border-[#111314]", wide && i === 0 ? "w-[174px]" : "w-[82px]")}
				>
					{option}
				</button>
			))}
		</div>
	);
}

function PropertiesPanel() {
	return (
		<section className="flex h-[408px] w-[1514px] shrink-0 flex-col gap-1 text-[24px] leading-none text-[#8d9399]">
			<div className="flex grow gap-2">
				<Panel className="w-[490px] rounded-lg">
					<h2 className="h-[42px] rounded-t-lg bg-[#33404d] pt-1 pl-[21px] text-[#dde1e6]">一般</h2>
					<div className="mr-px border-r-2 border-[#171e25] pt-2 pl-2">
						<div className="h-[50px]">
							<PropertySwitch label="再生を抑制" />
						</div>
						<div className="flex h-16">
							<div className="w-[260px]">
								<PropertySwitch label="スケール" />
							</div>
							<input type="text" aria-label="スケール" className="h-12 w-[184px] rounded-lg border-4 border-[#14171a]" />
						</div>
						<div className="flex h-16">
							<div className="w-[260px]">
								<PropertySwitch label="カスタム尺度" />
							</div>
							<input type="text" aria-label="カスタム尺度" className="h-12 w-[120px] rounded-lg border-4 border-[#14171a]" />
						</div>
						<PropertySwitch label="カラー" />
					</div>
				</Panel>
				<Panel className="min-w-0 grow rounded-lg">
					<h2 className="h-[42px] rounded-t-lg bg-[#33404d]" aria-label="ハープペダル" />
					<div className="flex h-[214px]">
						<div className="w-[554px] border-r-2 border-[#171e25] pt-[58px] pl-2">
							<div className="flex h-16">
								<PropertySwitch label="外観" />
								<Segmented options={["ダイアグラム", "音名"]} wide />
							</div>
							<div className="h-[50px]">
								<PropertyCheck label="部分的なペダリング" />
							</div>
							<PropertyCheck label="枠線" />
						</div>
						<div className="flex grow border-r-2 border-[#171e25] pt-2 pl-2">
							<PropertySwitch label="位置" />
							<Segmented options={["上", "下"]} />
						</div>
					</div>
				</Panel>
			</div>
			<div className="h-4 rounded-lg bg-[#141c22]" />
		</section>
	);
}

/* ---------- status bar ---------- */

const pageIcons = [
	<Icon w={42} h={14} key="spreads">
		<path d="M1 1H17V13H1ZM9 1V13M25 1H41V13H25ZM33 1V13" fill="none" stroke="currentColor" strokeWidth="2.500" />
	</Icon>,
	<Icon w={18} h={34} key="spreads-vertical">
		<path d="M1 2H17V13H1ZM9 2V13M1 22H17V33H1ZM9 22V33" fill="none" stroke="currentColor" strokeWidth="2.500" />
	</Icon>,
	<Icon w={34} h={14} key="single">
		<path d="M1 1H9V13H1ZM13 1H21V13H13ZM25 1H33V13H25Z" fill="none" stroke="currentColor" strokeWidth="2.500" />
	</Icon>,
	<Icon w={10} h={34} key="single-vertical">
		<path d="M1 2H9V13H1ZM1 22H9V33H1Z" fill="none" stroke="currentColor" strokeWidth="2.500" />
	</Icon>,
];

function StatusBar() {
	return (
		<footer className="mt-2 flex h-11 gap-0.5 text-[26px] leading-none text-[#dde1e6]">
			<Panel className="flex w-12 items-center justify-center">
				<Icon w={28} h={16}>
					<path d="M1 0V14M7 2V10M13 0V14M20 2V10M27 0V14" stroke="currentColor" strokeWidth="2" />
				</Icon>
			</Panel>
			<button type="button" aria-label="リズムグリッド" className="flex w-[98px] items-center justify-between bg-[#33404d] pr-3 pl-3">
				<Icon w={26} h={36}>
					<ellipse cx="8" cy="29" rx="9" ry="7" transform="rotate(-25 8 29)" />
					<path d="M13 0H17C17 8 26 9 24 20C22 14 20 12 17 12V28H13Z" />
				</Icon>
				<ChevronDown size={24} strokeWidth={3.5} />
			</button>
			<Panel className="flex w-20 items-center justify-center">実音</Panel>
			<Panel className="flex w-[200px] items-center pl-3.5">小節 1</Panel>
			<Panel className="flex w-[204px] items-center pl-3">ハープペダル</Panel>
			<Panel className="relative ml-0.5 flex grow items-center justify-center rounded-tl-lg rounded-tr-lg">
				<button type="button" aria-label="プロパティを隠す" className="pt-2">
					<ChevronDown size={34} strokeWidth={3.5} />
				</button>
			</Panel>
			<button type="button" aria-label="範囲選択" className="ml-0.5 flex w-16 items-center justify-center bg-[#00adff] text-black">
				<Icon w={34} h={28}>
					<path d="M1 1H33V27H1Z" fill="none" stroke="currentColor" strokeWidth="2.500" strokeDasharray="6 4" />
				</Icon>
			</button>
			<button type="button" aria-label="手のひら" className="flex w-16 items-center justify-center bg-[#33404d]">
				<Icon w={28} h={34}>
					<path
						d="M9 18V5M14 16V3M19 16V4M24 20V9M3 19L9 27"
						fill="none"
						stroke="currentColor"
						strokeWidth="4"
						strokeLinecap="round"
					/>
					<path d="M7 15H26V22C26 28 23 34 16 34C10 34 8 29 5 23Z" />
				</Icon>
			</button>
			<Panel className="w-6" />
			<label className="relative flex w-[206px] items-center bg-[#33404d]">
				<select aria-label="表示" className="h-full w-full appearance-none bg-transparent pl-4">
					<option>ページビ...</option>
				</select>
				<ChevronDown size={24} strokeWidth={3.5} className="pointer-events-none absolute right-3" />
			</label>
			{pageIcons.map((icon, i) => (
				<button
					type="button"
					key={i}
					className={clsx("flex w-15 items-center justify-center", i === 0 ? "bg-[#00adff] text-black" : "bg-[#33404d]")}
				>
					{icon}
				</button>
			))}
			<Panel className="w-6" />
			<button type="button" aria-label="ズーム" className="flex w-12 items-center justify-center bg-[#33404d]">
				<Search size={22} strokeWidth={2.5} />
			</button>
			<label className="relative flex w-40 items-center bg-[#33404d]">
				<select aria-label="倍率" className="h-full w-full appearance-none bg-transparent pl-4 text-[24px]">
					<option>200%</option>
				</select>
				<ChevronDown size={24} strokeWidth={3.5} className="pointer-events-none absolute right-3" />
			</label>
			<button type="button" aria-label="縮小" className="flex w-12 items-center justify-center bg-[#33404d]">
				<Minus size={26} strokeWidth={5} />
			</button>
			<button type="button" aria-label="拡大" className="flex w-12 items-center justify-center bg-[#33404d]">
				<Plus size={26} strokeWidth={5} />
			</button>
			<Panel className="w-9 rounded-br-lg" />
		</footer>
	);
}

export default function App() {
	return (
		<div className="flex min-h-screen bg-[#43484d] font-['Inter','Noto_Sans_CJK_JP',sans-serif]">
			<div className="flex min-w-0 grow flex-col">
				<MenuBar />
				<div className="flex grow flex-col rounded-t-[10px] bg-black font-['Noto_Sans_CJK_JP',sans-serif]">
					<TitleBar />
					<Toolbar />
					<main className="mt-2 flex grow text-[#dde1e6]">
						<div className="mr-1 flex w-18 shrink-0 flex-col gap-1">
							<Panel className="rounded-lg">
								{leftTools.map((icon, i) => (
									<ToolCell key={i}>{icon}</ToolCell>
								))}
							</Panel>
							<Panel className="flex grow items-center justify-center rounded-lg">
								<button type="button" aria-label="左ゾーンを隠す">
									<ChevronLeft size={34} strokeWidth={3.5} />
								</button>
							</Panel>
						</div>
						<NotesPanel />
						<div className="mx-2 flex min-w-0 grow flex-col">
							<div className="mb-1 flex h-[38px] gap-1">
								<button type="button" className="w-[182px] rounded-t-lg bg-[#00adff] text-[24px] leading-none font-medium text-black">
									フルスコア
								</button>
								<div className="grow rounded-tr-lg bg-[#141c22]" />
								<button type="button" aria-label="タブを追加" className="flex h-10 w-10 items-center justify-center rounded-t-lg bg-[#33404d]">
									<Plus size={26} strokeWidth={5} />
								</button>
							</div>
							<div className="flex grow bg-linear-to-b from-[#0076b4] via-[#009ee0] to-[#00bdec]">
								<article className="ml-[635px] w-[2374px] shrink-0 bg-white pt-[187px] text-center text-black">
									<h2 className="text-[80px] leading-[80px]">名称未設定のプロジェクト 3</h2>
									<h3 className="mt-[145px] text-[64px] leading-[64px]">1. フロー 1</h3>
									<Score />
								</article>
							</div>
							<div className="mt-1">
								<PropertiesPanel />
							</div>
						</div>
						<div className="flex w-18 shrink-0 flex-col gap-1">
							<Panel className="rounded-lg">
								{rightTools.map((icon, i) => (
									<div key={i} className="h-18 p-1">
										<ToolCell active={i === 0} className="h-full w-full pt-1">
											{icon}
										</ToolCell>
									</div>
								))}
							</Panel>
							<Panel className="rounded-lg">
								{textTools.map((icon, i) => (
									<ToolCell key={i}>{icon}</ToolCell>
								))}
							</Panel>
							<Panel className="flex grow items-center justify-center rounded-lg">
								<button type="button" aria-label="右ゾーンを隠す">
									<ChevronLeft size={34} strokeWidth={3.5} />
								</button>
							</Panel>
						</div>
					</main>
					<StatusBar />
				</div>
			</div>
			{/* sliver of desktop beside the window */}
			<div className="w-1 shrink-0 bg-linear-to-b from-[#43546a] from-50% to-[#c9c6c4] to-50%" />
		</div>
	);
}
